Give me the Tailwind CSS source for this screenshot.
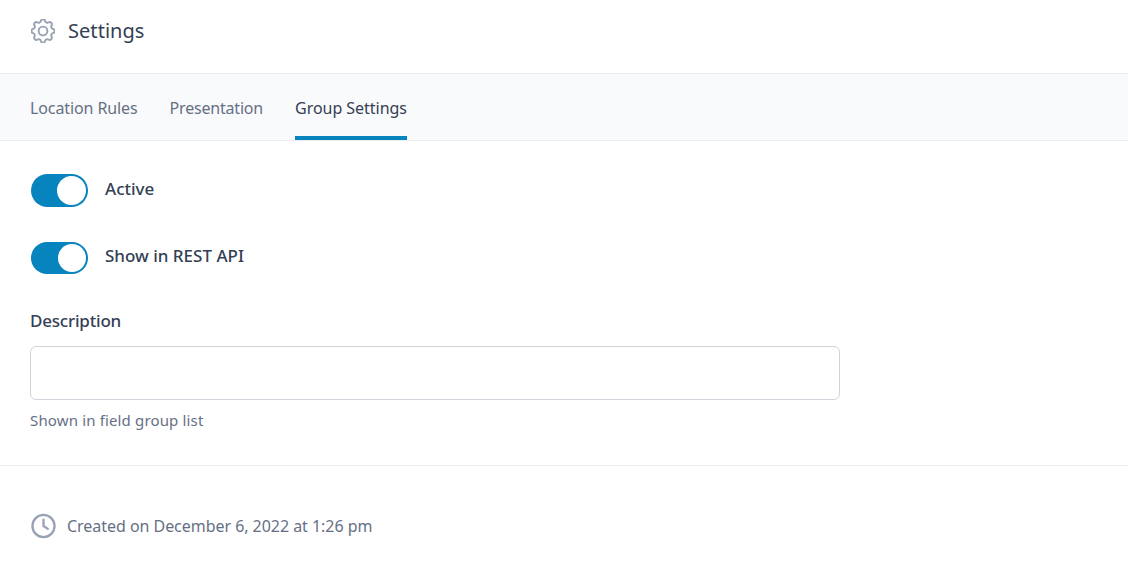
<!DOCTYPE html>
<html lang="en">
<head>
    <meta charset="UTF-8">
    <title>Settings</title>
    <script src="https://cdn.jsdelivr.net/npm/@tailwindcss/browser@4"></script>
</head>
<body class="bg-white font-['Noto_Sans',sans-serif] text-[#344054] h-[572px] overflow-hidden">

    <!-- Header -->
    <header class="h-[74px] border-b border-[#eaecf0] pl-[31px] flex items-center gap-[13px] pb-[12px]">
        <svg class="w-[24px] h-[24px] text-[#98a2b3]" xmlns="http://www.w3.org/2000/svg" viewBox="2.7 2.7 18.6 18.6" fill="none" stroke="currentColor" stroke-width="1.5" stroke-linecap="round" stroke-linejoin="round">
            <path d="M10.33 4.32c.43-1.76 2.92-1.76 3.35 0a1.72 1.72 0 0 0 2.57 1.07c1.54-.94 3.3.82 2.36 2.37a1.72 1.72 0 0 0 1.06 2.56c1.76.43 1.76 2.93 0 3.36a1.72 1.72 0 0 0-1.06 2.56c.94 1.55-.82 3.31-2.36 2.37a1.72 1.72 0 0 0-2.57 1.07c-.43 1.75-2.92 1.75-3.35 0a1.72 1.72 0 0 0-2.57-1.07c-1.54.94-3.3-.82-2.36-2.37a1.72 1.72 0 0 0-1.06-2.56c-1.76-.43-1.76-2.93 0-3.36a1.72 1.72 0 0 0 1.06-2.56c-.94-1.55.82-3.31 2.36-2.37a1.72 1.72 0 0 0 2.57-1.07z"/>
            <circle cx="12" cy="12" r="3.4"/>
        </svg>
        <h1 class="text-[20px] leading-[28px] tracking-[0.05px]">Settings</h1>
    </header>

    <!-- Tabs -->
    <nav class="h-[67px] bg-[#f9fafb] border-b border-[#eaecf0] pl-[30px] flex gap-[32px] text-[16px] text-[#667085]">
        <a class="flex items-center h-[66px] pt-[2px] tracking-[-0.1px]">Location Rules</a>
        <a class="flex items-center h-[66px] pt-[2px] tracking-[-0.2px]">Presentation</a>
        <a class="flex items-center h-[66px] text-[#344054] border-b-[4px] border-[#0783be] pt-[5px] tracking-[-0.03px]">Group Settings</a>
    </nav>

    <!-- Settings form -->
    <main class="h-[325px] border-b border-[#eaecf0] pl-[30px] pt-[33px]">
        <div class="flex items-center gap-[17px] h-[33px] pl-[1px]">
            <div class="w-[57px] h-[33px] rounded-full bg-[#0783be] flex items-center justify-end pr-[2px]">
                <span class="w-[29px] h-[29px] rounded-full bg-white"></span>
            </div>
            <span class="font-medium text-[17px] pb-[4px]">Active</span>
        </div>
        <div class="flex items-center gap-[17px] h-[32px] mt-[35px] pl-[1px]">
            <div class="w-[57px] h-[32px] rounded-full bg-[#0783be] flex items-center justify-end pr-[2px]">
                <span class="w-[28px] h-[28px] rounded-full bg-white"></span>
            </div>
            <span class="font-medium text-[17px] pb-[5px]">Show in REST API</span>
        </div>
        <label class="block font-medium text-[17px] leading-[24px] tracking-[-0.2px] mt-[35px]">Description</label>
        <input type="text" class="block w-[810px] h-[54px] mt-[13px] rounded-[6px] border border-[#d0d3d9] bg-white">
        <p class="text-[15px] leading-[20px] text-[#667085] tracking-[0.15px] mt-[10px]">Shown in field group list</p>
    </main>

    <!-- Footer -->
    <footer class="flex items-center gap-[11px] pl-[31px] pt-[47px]">
        <svg class="w-[25px] h-[26px] text-[#98a2b3]" xmlns="http://www.w3.org/2000/svg" viewBox="0 0 26 26" fill="none" stroke="currentColor" stroke-width="2.4" stroke-linecap="round" stroke-linejoin="round">
            <circle cx="13" cy="13" r="11.5"/>
            <path d="M13 6.5V13l4.5 3"/>
        </svg>
        <span class="text-[16px] text-[#667085] tracking-[-0.04px]">Created on December 6, 2022 at 1:26 pm</span>
    </footer>

</body>
</html>
